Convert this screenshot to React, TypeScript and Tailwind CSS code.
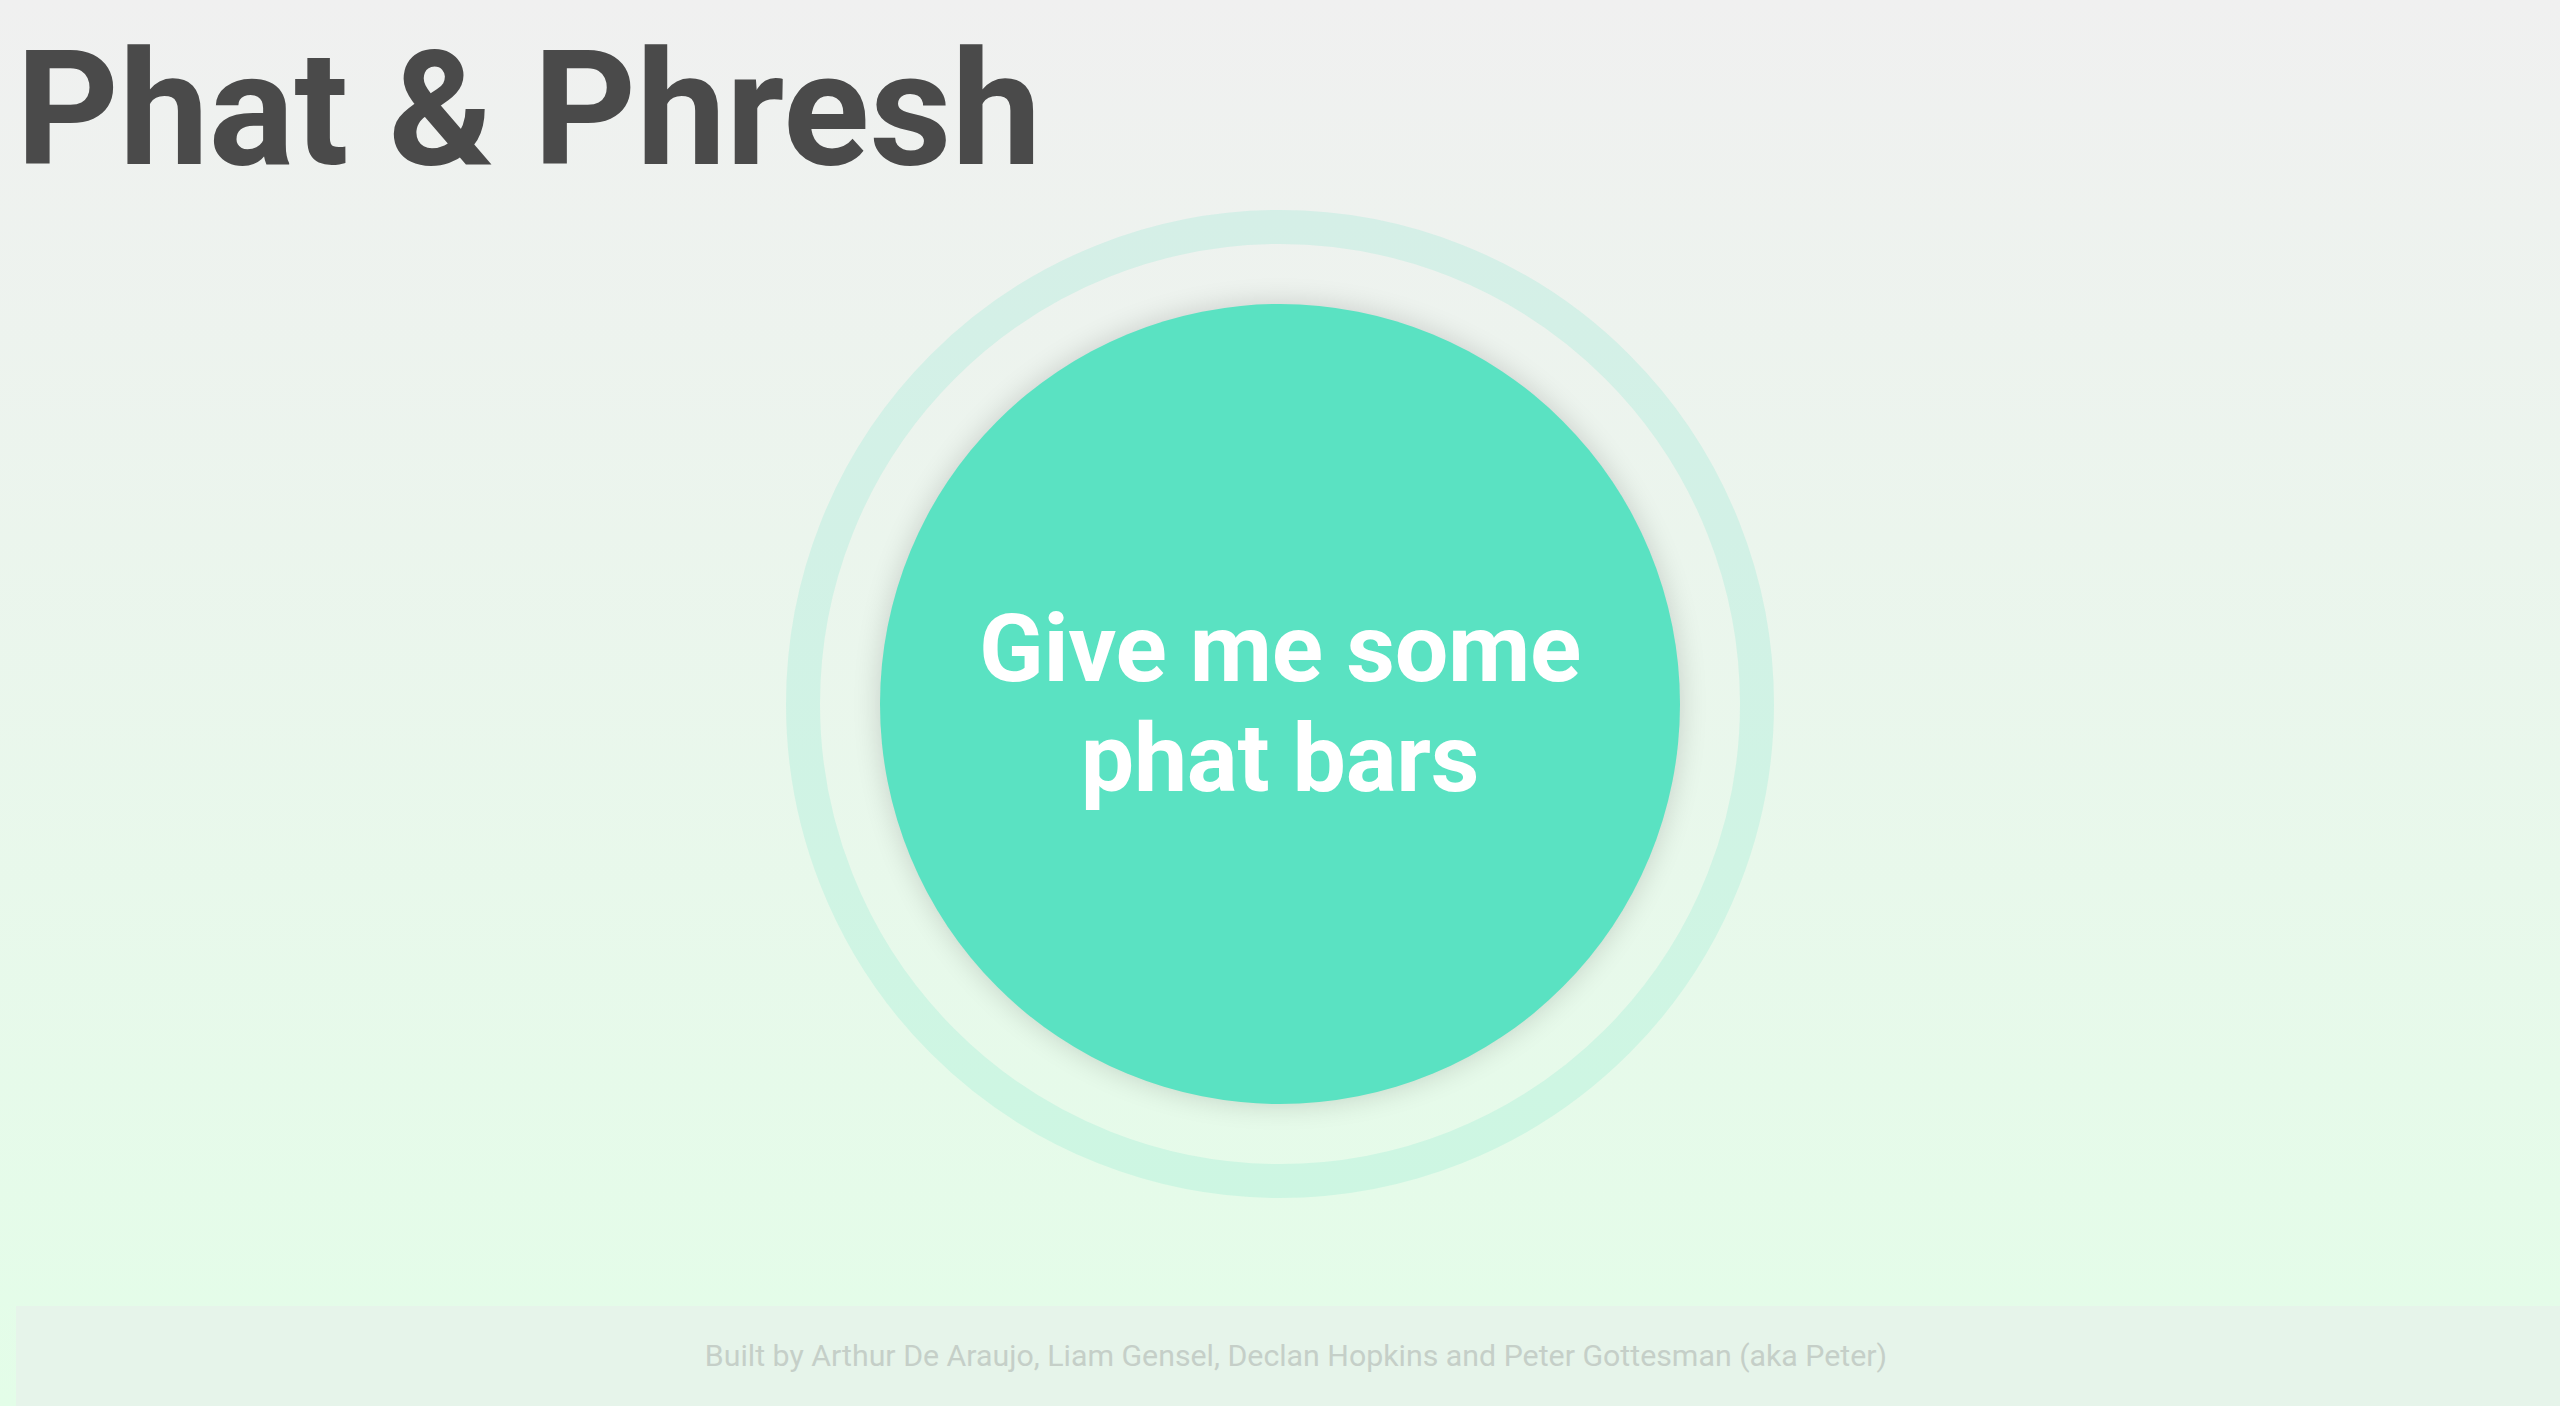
import React from "react";

export default function App() {
  return (
    <div
      className="relative w-[2560px] h-[1406px] overflow-hidden bg-gradient-to-b from-[#f0f0f0] to-[#e3fde8]"
      style={{ fontFamily: "Roboto, 'Noto Sans', sans-serif" }}
    >
      <h1 className="pl-4 pt-4 text-[160px] leading-[188px] font-bold text-[#4a4a4a] whitespace-nowrap">
        Phat &amp; Phresh
      </h1>
      <div className="flex justify-center mt-[6px]">
        <div className="w-[988px] h-[988px] rounded-full border-[34px] border-[rgba(90,226,194,0.17)] flex items-center justify-center">
          <button className="w-[800px] h-[800px] rounded-full bg-[#5ae2c2] shadow-[0_0_28px_rgba(0,0,0,0.16)] flex items-center justify-center">
            <span className="text-white font-bold text-[95px] leading-[110px] text-center tracking-[-0.3px]">
              Give me some
              <br />
              phat bars
            </span>
          </button>
        </div>
      </div>
      <footer className="absolute left-4 top-[1306px] w-[2560px] h-[100px] bg-[#e6f4ea] flex items-center justify-center">
        <p className="text-[30.3px] text-[#c5cfc8] whitespace-nowrap">
          Built by Arthur De Araujo, Liam Gensel, Declan Hopkins and Peter Gottesman (aka Peter)
        </p>
      </footer>
    </div>
  );
}
